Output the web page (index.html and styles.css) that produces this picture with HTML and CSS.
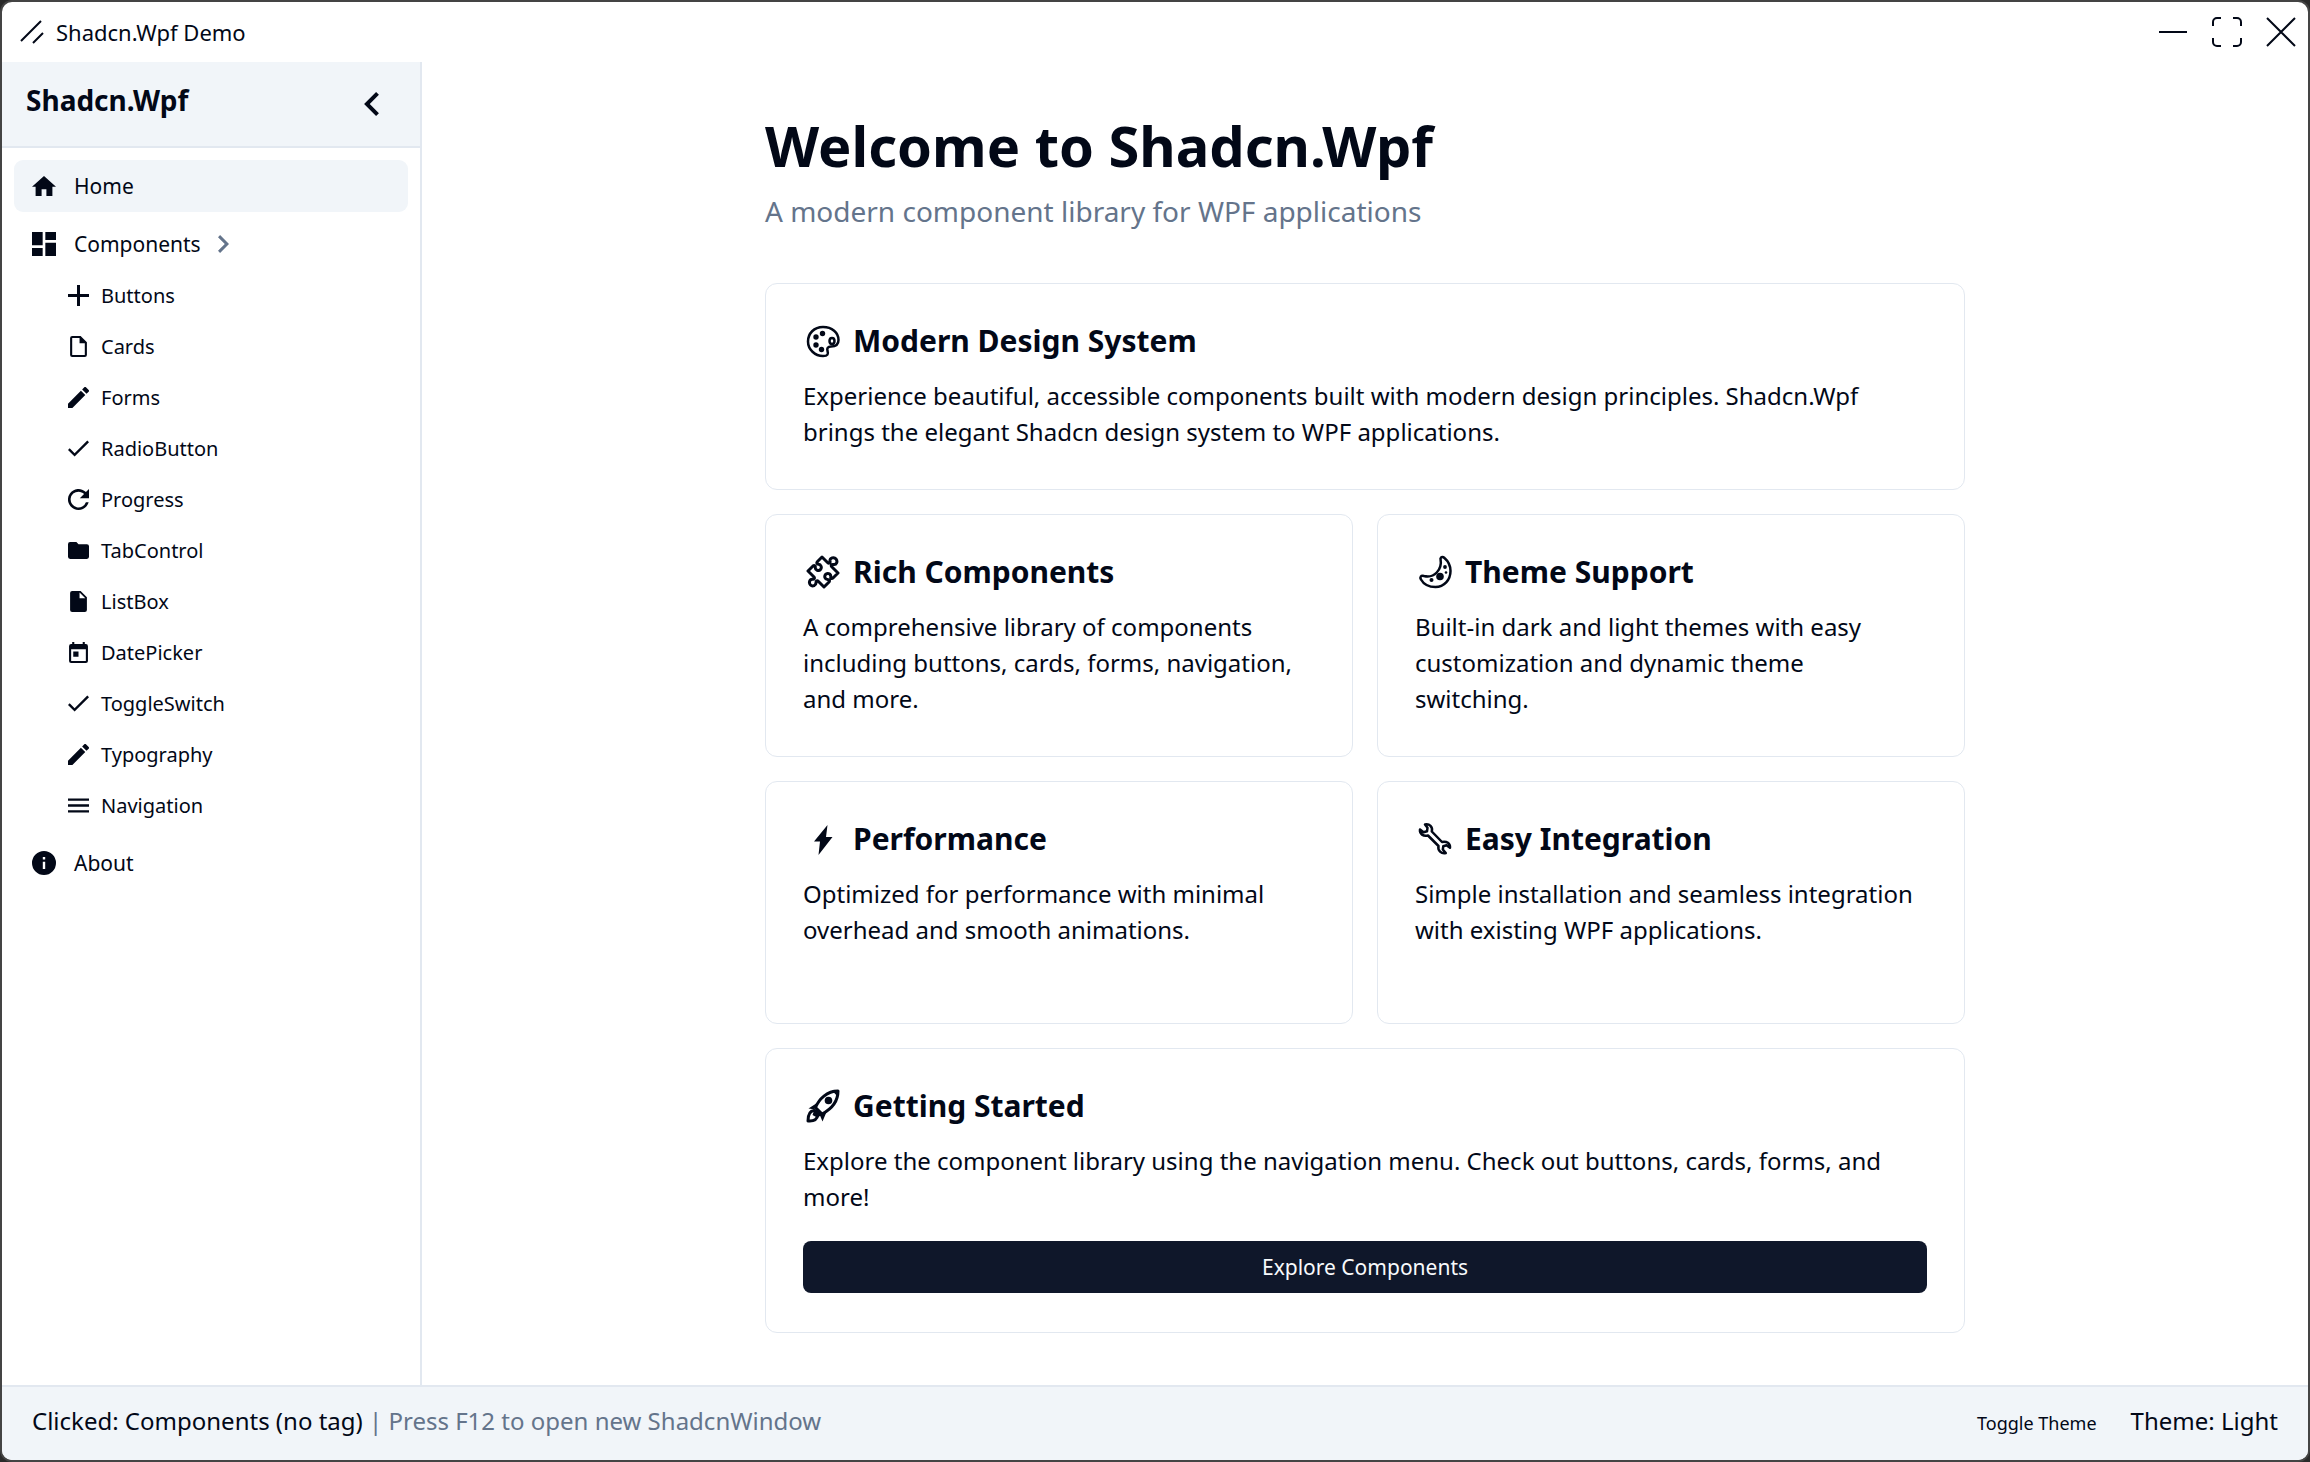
FILE: index.html
```html
<!DOCTYPE html>
<html lang="en">
<head>
<meta charset="utf-8">
<title>Shadcn.Wpf Demo</title>
<link rel="stylesheet" href="styles.css">
</head>
<body>
<div class="window">
  <header class="titlebar">
    <svg class="app-icon" viewBox="0 0 24 24" aria-hidden="true"><path d="M1 21 21 1M13 23 23 13"/></svg>
    <span class="app-title">Shadcn.Wpf Demo</span>
    <div class="window-controls">
      <button type="button" aria-label="Minimize"><svg viewBox="0 0 30 30"><path d="M1 15H29"/></svg></button>
      <button type="button" aria-label="Maximize"><svg viewBox="0 0 30 30"><path d="M1 9V5A4 4 0 0 1 5 1H9M21 1H25A4 4 0 0 1 29 5V9M29 21V25A4 4 0 0 1 25 29H21M9 29H5A4 4 0 0 1 1 25V21"/></svg></button>
      <button type="button" aria-label="Close"><svg viewBox="0 0 30 30"><path d="M1 1 29 29M29 1 1 29"/></svg></button>
    </div>
  </header>

  <div class="body">
    <aside class="sidebar">
      <div class="sidebar-head">
        <span class="brand">Shadcn.Wpf</span>
        <button type="button" class="collapse" aria-label="Collapse sidebar"><svg viewBox="8 6 7.41 12"><path d="M15.41 16.58 10.83 12l4.58-4.59L14 6l-6 6 6 6z"/></svg></button>
      </div>
      <nav class="nav">
        <a href="#home" class="nav-item active"><span class="nav-icon"><svg viewBox="2 3 20 17"><path d="M10 20v-6h4v6h5v-8h3L12 3 2 12h3v8z"/></svg></span>Home</a>
        <div class="nav-group">
          <a href="#components" class="nav-item"><span class="nav-icon"><svg viewBox="3 3 18 18"><path d="M13 3v6h8V3M13 21h8V11h-8M3 21h8v-6H3M3 13h8V3H3z"/></svg></span>Components<svg class="chevron" viewBox="8.59 6 7.41 12"><path d="M8.59 16.58 13.17 12 8.59 7.41 10 6l6 6-6 6z"/></svg></a>
          <div class="subnav">
            <a href="#buttons"><svg viewBox="5 5 14 14"><path d="M19 13h-6v6h-2v-6H5v-2h6V5h2v6h6z"/></svg>Buttons</a>
            <a href="#cards"><svg viewBox="4 2 16 20"><path d="M14 2H6a2 2 0 0 0-2 2v16a2 2 0 0 0 2 2h12a2 2 0 0 0 2-2V8l-6-6m4 18H6V4h7v5h5z"/></svg>Cards</a>
            <a href="#forms"><svg viewBox="3 3 18 18"><path d="M20.71 7.04c.39-.39.39-1.04 0-1.41l-2.34-2.34c-.37-.39-1.02-.39-1.41 0l-1.84 1.83 3.75 3.75M3 17.25V21h3.75L17.81 9.93l-3.75-3.75z"/></svg>Forms</a>
            <a href="#radiobutton"><svg viewBox="3.5 5.59 17.5 13.41"><path d="M21 7 9 19l-5.500-5.500 1.410-1.410L9 16.170 19.590 5.590z"/></svg>RadioButton</a>
            <a href="#progress"><svg viewBox="4 4 16 16"><path d="M17.65 6.35A8 8 0 1 0 19.73 14h-2.08A6 6 0 1 1 12 6c1.66 0 3.14.69 4.22 1.78L13 11h7V4z"/></svg>Progress</a>
            <a href="#tabcontrol"><svg viewBox="2 4 20 16"><path d="M10 4H4a2 2 0 0 0-2 2v12a2 2 0 0 0 2 2h16a2 2 0 0 0 2-2V8a2 2 0 0 0-2-2h-8z"/></svg>TabControl</a>
            <a href="#listbox"><svg viewBox="4 2 16 20"><path d="M13 9V3.5L18.5 9M6 2a2 2 0 0 0-2 2v16a2 2 0 0 0 2 2h12a2 2 0 0 0 2-2V8l-6-6z"/></svg>ListBox</a>
            <a href="#datepicker"><svg viewBox="3 1 18 20"><path d="M19 19H5V8h14m-3-7v2H8V1H6v2H5a2 2 0 0 0-2 2v14a2 2 0 0 0 2 2h14a2 2 0 0 0 2-2V5a2 2 0 0 0-2-2h-1V1M7 10h5v5H7z"/></svg>DatePicker</a>
            <a href="#toggleswitch"><svg viewBox="3.5 5.59 17.5 13.41"><path d="M21 7 9 19l-5.500-5.500 1.410-1.410L9 16.170 19.590 5.590z"/></svg>ToggleSwitch</a>
            <a href="#typography"><svg viewBox="3 3 18 18"><path d="M20.71 7.04c.39-.39.39-1.04 0-1.41l-2.34-2.34c-.37-.39-1.02-.39-1.41 0l-1.84 1.83 3.75 3.75M3 17.25V21h3.75L17.81 9.93l-3.75-3.75z"/></svg>Typography</a>
            <a href="#navigation"><svg viewBox="3 6 18 12"><path d="M3 6h18v2H3zM3 11h18v2H3zM3 16h18v2H3z"/></svg>Navigation</a>
          </div>
        </div>
        <a href="#about" class="nav-item"><span class="nav-icon"><svg viewBox="2 2 20 20"><path d="M13 9h-2V7h2m0 10h-2v-6h2m-1-9a10 10 0 1 0 0 20 10 10 0 0 0 0-20z"/></svg></span>About</a>
      </nav>
    </aside>

    <main class="content">
      <div class="page">
        <h1>Welcome to Shadcn.Wpf</h1>
        <p class="lead">A modern component library for WPF applications</p>
        <div class="cards">
          <section class="card wide">
            <h2><svg class="line" viewBox="0 0 34 34"><path d="M17 3C8 3 2 9.500 2 17.500S9 32 17 32c5 0 5.500-2 4.500-5-.8-2.700.3-4.500 3.500-4.500 5 0 7.500-2 7.500-6.500C32.500 8.500 26 3 17 3z"/><ellipse cx="26" cy="17" rx="2.500" ry="3"/><g class="solid"><circle cx="16.500" cy="9.500" r="2.700"/><circle cx="10" cy="13" r="2.700"/><circle cx="10" cy="21" r="2.700"/><circle cx="15.500" cy="25.500" r="2.700"/></g></svg>Modern Design System</h2>
            <p>Experience beautiful, accessible components built with modern design principles. Shadcn.Wpf brings the elegant Shadcn design system to WPF applications.</p>
          </section>
          <div class="pairs">
            <section class="card">
              <h2><svg class="line heavy" viewBox="0 0 34 34"><path d="M11.500 6.500 16 2l5.500 5.500c1.500 1.500 3 .5 2.500-1.500-.3-3 4-4.500 6-2s.5 6-2.500 5.500c-2-.3-3 1-1.500 2.500L32 18l-5 5c-1.500 1-2.500 0-2.300-1.500.3-3-3.700-4-5.200-2s-.5 5 2 5c2 0 2.500 1.500 1.300 2.700L18 32l-5.500-5.500c-1.300-1.200-2.500-.5-2.500 1 .3 3-3.500 4.500-5.500 2.500s-1-6 2-5.800c1.800.2 2.500-1.200 1.300-2.500L2 16l5-5c1.500-1.200 2.500-.2 2.300 1.300-.3 3 3.500 4.200 5.200 2.200s.5-5-2-5.200c-1.700-.1-2.200-1.600-1-2.800z"/></svg>Rich Components</h2>
              <p>A comprehensive library of components including buttons, cards, forms, navigation, and more.</p>
            </section>
            <section class="card">
              <h2><svg class="line" viewBox="0 0 34 34"><path d="M22.500 3.500c.5-2 2.500-2 4-.5 4 3.500 6 8 6 13 0 9-6.500 16-15 16-6.500 0-12-3-14.500-7.500-1.500-2.500 0-4.500 3-3.500C16 23.500 24.500 15 22.500 3.500z"/><g class="solid"><circle cx="22" cy="21.500" r="3.800"/><circle cx="27" cy="12" r="1.900"/><circle cx="13.500" cy="25" r="2"/><circle cx="28" cy="17.500" r="1.300"/></g></svg>Theme Support</h2>
              <p>Built-in dark and light themes with easy customization and dynamic theme switching.</p>
            </section>
            <section class="card">
              <h2><svg class="bolt" viewBox="0 0 34 34"><path d="M21.500 3 8 19.500h6L12.500 33 26.500 15H20l1.500-12z"/></svg>Performance</h2>
              <p>Optimized for performance with minimal overhead and smooth animations.</p>
            </section>
            <section class="card">
              <h2><svg class="line" viewBox="0 0 34 34"><path d="M7 2.500c4.500-1 8 2.500 6.800 7L24 20c4.500-1.200 8.500 1.500 8 5.800l-3.500-2.500-3.200 1-.5 3.200 3 3.500c-4.500 1-8.300-2.500-7.300-7L10 13.500c-4.500 1.200-8.700-1.500-8-6l3.500 2.700 3.500-1 .5-3.500z"/></svg>Easy Integration</h2>
              <p>Simple installation and seamless integration with existing WPF applications.</p>
            </section>
          </div>
          <section class="card wide">
            <h2><svg class="line heavy" viewBox="0 0 34 34"><path d="M9.500 18.500C13 10 21 2 32 2c0 10-6.500 18-16 23z"/><path class="solid" d="M26 1.500 32.500 1.500 32 8zM11 14 2.500 19.500l7 1zM20.500 23l-4 9.500-2.500-6zM9 19l7 7-5 2.500-4.500-2.500z"/><circle class="solid" cx="22.500" cy="11.500" r="3.800"/><path d="M8 21.500c-4.500.5-6 5-6 10.500 5 .5 9-1.500 10-6"/></svg>Getting Started</h2>
            <p>Explore the component library using the navigation menu. Check out buttons, cards, forms, and more!</p>
            <button type="button" class="primary">Explore Components</button>
          </section>
        </div>
      </div>
    </main>
  </div>

  <footer class="statusbar">
    <p>Clicked: Components (no tag) <span class="muted">| Press F12 to open new ShadcnWindow</span></p>
    <button type="button" class="toggle">Toggle Theme</button>
    <span>Theme: Light</span>
  </footer>
</div>
</body>
</html>
```
FILE: styles.css
```css
:root {
  --ink: #020817;
  --muted: #64748b;
  --surface: #f1f5f9;
  --line: #e2e8f0;
  --frame: #444;
}

* { box-sizing: border-box; }

body {
  margin: 0;
  background: #2a2a2a;
  color: var(--ink);
  font-family: "Noto Sans", "Open Sans", sans-serif;
}

h1, h2, p { margin: 0; }
a { color: inherit; text-decoration: none; }
button { padding: 0; border: 0; background: none; color: inherit; font: inherit; cursor: pointer; }
svg { display: block; fill: currentColor; flex: none; }

.window {
  display: flex;
  flex-direction: column;
  min-height: 100vh;
  overflow: hidden;
  background: #fff;
  border: 2px solid var(--frame);
  border-radius: 12px;
}

/* Title bar */
.titlebar {
  display: flex;
  align-items: center;
  height: 60px;
  padding: 0 12px 0 18px;
}
.app-icon { width: 24px; height: 24px; margin-right: 12px; fill: none; stroke: currentColor; stroke-width: 2; }
.app-title { font-size: 22px; line-height: 28px; }
.window-controls { display: flex; gap: 24px; margin-left: auto; }
.window-controls svg { width: 30px; height: 30px; fill: none; stroke: currentColor; stroke-width: 2; }

.body { display: flex; flex: 1; }

/* Sidebar */
.sidebar { flex: none; width: 420px; border-right: 2px solid var(--line); }
.sidebar-head {
  display: flex;
  align-items: center;
  justify-content: space-between;
  height: 86px;
  padding: 0 41px 0 24px;
  background: var(--surface);
  border-bottom: 2px solid var(--line);
}
.brand { font-size: 28px; font-weight: 700; line-height: 36px; padding-bottom: 8px; }
.collapse svg { width: 15px; height: 24px; }

.nav { display: flex; flex-direction: column; gap: 6px; padding: 12px; }
.nav-item {
  display: flex;
  align-items: center;
  height: 52px;
  padding: 0 18px;
  border-radius: 9px;
  font-size: 21px;
  line-height: 28px;
}
.nav-item.active { background: var(--surface); }
.nav-icon { width: 42px; }
.nav-icon svg { width: 24px; }
.chevron { width: 11px; height: 18px; margin-left: 17px; color: var(--muted); }

.subnav { padding-left: 54px; }
.subnav a { display: flex; align-items: center; gap: 12px; height: 51px; font-size: 20px; line-height: 26px; }
.subnav svg { width: 21px; height: 21px; }

/* Page */
.content { flex: 1; padding: 45px 36px 48px; }
.page { max-width: 1200px; margin: 0 auto; }
h1 { font-size: 56px; line-height: 76px; }
.lead { margin: 9px 0 53px; color: var(--muted); font-size: 28px; line-height: 38px; }

.cards { display: flex; flex-direction: column; gap: 24px; }
.pairs { display: grid; grid-template-columns: 1fr 1fr; grid-auto-rows: 1fr; gap: 24px; }
.card { padding: 37px 37px 39px; border: 1px solid var(--line); border-radius: 12px; }
.card h2 {
  display: flex;
  align-items: center;
  gap: 13px;
  margin-bottom: 17px;
  padding-left: 3px;
  font-size: 30px;
  line-height: 40px;
}
.card h2 svg { width: 34px; height: 34px; }
.card p { padding-right: 6px; font-size: 24px; line-height: 36px; }

.line { fill: none; stroke: currentColor; stroke-width: 2.5; stroke-linejoin: round; stroke-linecap: round; }
.heavy { stroke-width: 3; }
.solid { fill: currentColor; stroke: none; }

.primary {
  display: block;
  width: 100%;
  height: 52px;
  margin-top: 26px;
  background: #0f172a;
  border-radius: 8px;
  color: #f8fafc;
  font-size: 21px;
}

/* Status bar */
.statusbar {
  display: flex;
  align-items: baseline;
  height: 75px;
  padding: 17px 30px 0;
  background: var(--surface);
  border-top: 2px solid var(--line);
  font-size: 24px;
  line-height: 34px;
}
.muted { color: var(--muted); }
.toggle { margin: 0 34px 0 auto; font-size: 18px; }
```
